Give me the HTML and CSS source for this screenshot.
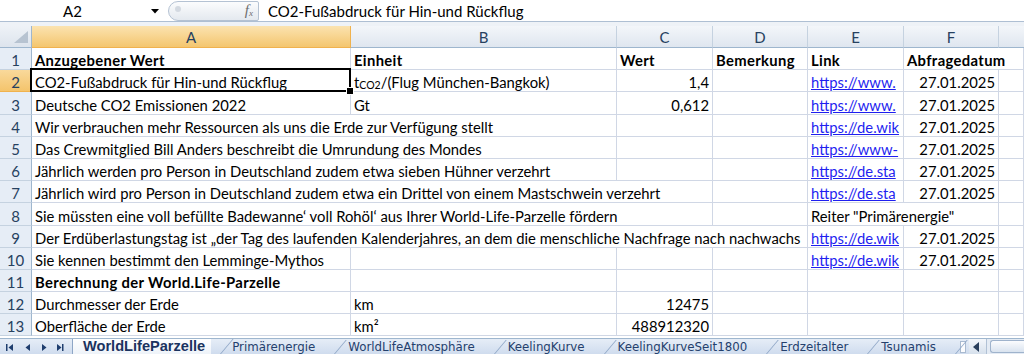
FILE: index.html
```html
<!DOCTYPE html>
<html lang="de">
<head>
<meta charset="utf-8">
<title>Excel – WorldLifeParzelle</title>
<link rel="stylesheet" href="styles.css">
</head>
<body>
<div class="app">
  <div class="fbar">
    <div class="namebox">A2</div>
    <div class="nb-drop"><svg width="8" height="5" viewBox="0 0 8 5"><path d="M0 0h8L4 4.5z" fill="#000"/></svg></div>
    <div class="pill">
      <span class="knob"></span>
      <span class="fx">f<sub>x</sub></span>
    </div>
    <div class="formula">CO2-Fußabdruck für Hin-und Rückflug</div>
  </div>
  <div class="gap"></div>
  <div class="sheet">
    <div class="corner"><svg width="18" height="14" viewBox="0 0 18 14"><path d="M17 1V13H3z" fill="#b7c3d1"/></svg></div>
    <div class="ch sel">A</div>
    <div class="ch">B</div>
    <div class="ch">C</div>
    <div class="ch">D</div>
    <div class="ch">E</div>
    <div class="ch">F</div>
    <div class="ch last"></div>

    <div class="rh">1</div>
    <div class="c b">Anzugebener Wert</div>
    <div class="c b">Einheit</div>
    <div class="c b">Wert</div>
    <div class="c b">Bemerkung</div>
    <div class="c b">Link</div>
    <div class="c b s2">Abfragedatum</div>

    <div class="rh sel">2</div>
    <div class="c active">CO2-Fußabdruck für Hin-und Rückflug</div>
    <div class="c">t<span class="co2">CO2</span>/(Flug München-Bangkok)</div>
    <div class="c r">1,4</div>
    <div class="c"></div>
    <div class="c"><span class="ln">https://www.</span></div>
    <div class="c r">27.01.2025</div>
    <div class="c"></div>

    <div class="rh">3</div>
    <div class="c">Deutsche CO2 Emissionen 2022</div>
    <div class="c">Gt</div>
    <div class="c r">0,612</div>
    <div class="c"></div>
    <div class="c"><span class="ln">https://www.</span></div>
    <div class="c r">27.01.2025</div>
    <div class="c"></div>

    <div class="rh">4</div>
    <div class="c s2">Wir verbrauchen mehr Ressourcen als uns die Erde zur Verfügung stellt</div>
    <div class="c"></div>
    <div class="c"></div>
    <div class="c"><span class="ln">https://de.wik</span></div>
    <div class="c r">27.01.2025</div>
    <div class="c"></div>

    <div class="rh">5</div>
    <div class="c s2">Das Crewmitglied Bill Anders beschreibt die Umrundung des Mondes</div>
    <div class="c"></div>
    <div class="c"></div>
    <div class="c"><span class="ln">https://www-</span></div>
    <div class="c r">27.01.2025</div>
    <div class="c"></div>

    <div class="rh">6</div>
    <div class="c s2">Jährlich werden pro Person in Deutschland zudem etwa sieben Hühner verzehrt</div>
    <div class="c"></div>
    <div class="c"></div>
    <div class="c"><span class="ln">https://de.sta</span></div>
    <div class="c r">27.01.2025</div>
    <div class="c"></div>

    <div class="rh">7</div>
    <div class="c s3">Jährlich wird pro Person in Deutschland zudem etwa ein Drittel von einem Mastschwein verzehrt</div>
    <div class="c"></div>
    <div class="c"><span class="ln">https://de.sta</span></div>
    <div class="c r">27.01.2025</div>
    <div class="c"></div>

    <div class="rh">8</div>
    <div class="c s3">Sie müssten eine voll befüllte Badewanne‘ voll Rohöl‘ aus Ihrer World-Life-Parzelle fördern</div>
    <div class="c"></div>
    <div class="c s2">Reiter "Primärenergie"</div>
    <div class="c"></div>

    <div class="rh">9</div>
    <div class="c s4">Der Erdüberlastungstag ist „der Tag des laufenden Kalenderjahres, an dem die menschliche Nachfrage nach nachwachs</div>
    <div class="c"><span class="ln">https://de.wik</span></div>
    <div class="c r">27.01.2025</div>
    <div class="c"></div>

    <div class="rh">10</div>
    <div class="c">Sie kennen bestimmt den Lemminge-Mythos</div>
    <div class="c"></div>
    <div class="c"></div>
    <div class="c"></div>
    <div class="c"><span class="ln">https://de.wik</span></div>
    <div class="c r">27.01.2025</div>
    <div class="c"></div>

    <div class="rh">11</div>
    <div class="c b">Berechnung der World.Life-Parzelle</div>
    <div class="c"></div>
    <div class="c"></div>
    <div class="c"></div>
    <div class="c"></div>
    <div class="c"></div>
    <div class="c"></div>

    <div class="rh">12</div>
    <div class="c">Durchmesser der Erde</div>
    <div class="c">km</div>
    <div class="c r">12475</div>
    <div class="c"></div>
    <div class="c"></div>
    <div class="c"></div>
    <div class="c"></div>

    <div class="rh">13</div>
    <div class="c">Oberfläche der Erde</div>
    <div class="c">km²</div>
    <div class="c r">488912320</div>
    <div class="c"></div>
    <div class="c"></div>
    <div class="c"></div>
    <div class="c"></div>
  </div>
  <div class="tabs">
    <div class="nav">
      <svg width="64" height="16" viewBox="0 0 64 16">
        <g fill="#1f3e6e">
          <rect x="6" y="5" width="1.5" height="7"/>
          <path d="M13 5v7L8.5 8.5z"/>
          <path d="M30 5v7L25.5 8.5z"/>
          <path d="M42 5v7l4.5-3.5z"/>
          <path d="M57 5v7l4.5-3.5z"/>
          <rect x="62" y="5" width="1.5" height="7"/>
        </g>
      </svg>
    </div>
    <div class="tab on">WorldLifeParzelle</div>
    <div class="tab">Primärenergie</div>
    <div class="tab">WorldLifeAtmosphäre</div>
    <div class="tab">KeelingKurve</div>
    <div class="tab">KeelingKurveSeit1800</div>
    <div class="tab">Erdzeitalter</div>
    <div class="tab">Tsunamis</div>
    <div class="splitter"></div>
    <div class="hscroll">
      <div class="sbtn"><svg width="8" height="10" viewBox="0 0 8 10"><path d="M6 0v10L0 5z" fill="#2a3f5c"/></svg></div>
      <div class="thumb"></div>
    </div>
  </div>
</div>
</body>
</html>
```

FILE: styles.css
```css
* { box-sizing: border-box; }
html, body { margin: 0; padding: 0; }
body {
  width: 1024px;
  height: 354px;
  overflow: hidden;
  background: #fff;
  font-family: Lato, "Open Sans", sans-serif;
  font-size: 14.8px;
  color: #000;
}
.app { display: flex; flex-direction: column; height: 354px; }

/* formula bar */
.fbar {
  height: 22px;
  display: flex;
  align-items: center;
  background: #fff;
  border-bottom: 1px solid #aebfd3;
}
.namebox { width: 145px; text-align: center; font-size: 15px; padding-top: 1px; }
.nb-drop { width: 20px; display: flex; align-items: center; justify-content: flex-start; padding-left: 6px; padding-top: 1px; }
.pill {
  width: 91px;
  height: 20px;
  margin-left: 3px;
  border: 1px solid #b4c2d3;
  border-radius: 10px 2px 2px 10px;
  background: linear-gradient(#fbfcfd, #e4e9ef);
  display: flex;
  align-items: center;
  justify-content: space-between;
  padding: 0 5px 0 6px;
}
.knob { width: 6px; height: 6px; border-radius: 50%; background: #d3d9e1; margin-top: -4px; }
.fx { font-family: "Liberation Serif", serif; font-style: italic; color: #6d6d6d; font-size: 15px; }
.fx sub { font-size: 9px; vertical-align: -1px; }
.formula { padding-left: 9px; font-size: 15px; padding-top: 1px; }
.gap { height: 4px; background: #eef2f7; }

/* grid */
.sheet {
  display: grid;
  grid-template-columns: 32px 319px 266px 96px 95px 96px 95px 1fr;
  grid-template-rows: 22px;
  grid-auto-rows: 22.2px;
  height: 312px;
  overflow: hidden;
}
.corner {
  background: linear-gradient(#eef2f7, #dde4ed);
  border-right: 1px solid #9eb6ce;
  border-bottom: 1px solid #9eb6ce;
  display: flex;
  align-items: flex-end;
  justify-content: flex-end;
  padding: 0 2px 3px 0;
}
.ch {
  background: linear-gradient(#f3f6fa, #dfe6ef);
  border-right: 1px solid #c5d2e0;
  border-bottom: 1px solid #9eb6ce;
  color: #27415f;
  display: flex;
  align-items: center;
  justify-content: center;
  font-size: 15px;
  padding-top: 1px;
}
.ch.sel {
  background: linear-gradient(#fbe3b0, #f4c66f);
  border-right-color: #f0b24e;
  border-bottom-color: #f0b24e;
}
.ch.last { border-right: 0; }
.rh {
  background: #e6edf6;
  border-right: 1px solid #9eb6ce;
  border-bottom: 1px solid #c5d2e0;
  color: #27415f;
  display: flex;
  align-items: flex-end;
  justify-content: center;
  padding-bottom: 0;
  font-size: 15px;
  line-height: 18px;
}
.rh.sel { background: linear-gradient(#f9d99b, #f4c46c); border-bottom-color: #f0b24e; }
.c {
  border-right: 1px solid #d0d7e5;
  border-bottom: 1px solid #d0d7e5;
  display: flex;
  align-items: flex-end;
  padding: 0 3px 0 3px;
  white-space: nowrap;
  overflow: hidden;
  line-height: 18px;
}
.c.b { font-weight: bold; letter-spacing: 0.35px; }
.c.r { justify-content: flex-end; }
.s2 { grid-column: span 2; }
.s3 { grid-column: span 3; }
.s4 { grid-column: span 4; }
.ln { color: #1f1ff0; text-decoration: underline; }
.co2 { font-size: 10.5px; position: relative; top: 3px; }
.active { position: relative; overflow: visible; }
.active::after {
  content: "";
  position: absolute;
  left: -2px; top: -2px; right: -1px; bottom: -1px;
  border: 2px solid #000;
  pointer-events: none;
}
.active::before {
  content: "";
  position: absolute;
  right: -4px; bottom: -4px;
  width: 6px; height: 6px;
  background: #000;
  border: 1px solid #fff;
  z-index: 2;
}

/* sheet tabs */
.tabs {
  flex: 1;
  display: flex;
  align-items: stretch;
  background: linear-gradient(#e6edf7, #cfdcee);
  border-top: 1px solid #9eb6ce;
  font-family: "DejaVu Sans", sans-serif;
  font-size: 11.8px;
  color: #24406d;
  overflow: hidden;
}
.nav { width: 72px; display: flex; align-items: center; }
.tab {
  position: relative;
  display: flex;
  align-items: center;
  padding: 0 10px 0 11px;
  margin-right: 12px;
  white-space: nowrap;
}
.tab::after {
  content: "";
  position: absolute;
  right: -10px;
  top: 1px;
  bottom: 0;
  width: 1px;
  background: #8ea6c6;
  transform: skewX(-40deg);
  transform-origin: bottom;
}
.tab.on {
  font-family: "Liberation Sans", sans-serif;
  font-weight: bold;
  font-size: 14.6px;
  color: #1b3360;
  background: linear-gradient(#ffffff, #eef3f9);
  margin-top: -1px;
  border-left: 1px solid #8ea6c6;
  padding: 0 6px 0 10px;
  margin-right: 10px;
}
.splitter { width: 6px; margin: 2px 3px 1px 2px; background: #fbfcfe; border: 1px solid #a9bad0; }
.hscroll { flex: 1; display: flex; align-items: stretch; background: #e4ebf4; }
.sbtn { width: 18px; display: flex; align-items: center; justify-content: center; background: linear-gradient(#f4f7fb, #d6e0ec); border-right: 1px solid #b1c1d5; }
.thumb { flex: 1; margin: 1px 0 1px 3px; border: 1px solid #9fb3cc; border-right: 0; border-radius: 3px 0 0 3px; background: linear-gradient(#fbfcfe, #d9e3ef); }
```
